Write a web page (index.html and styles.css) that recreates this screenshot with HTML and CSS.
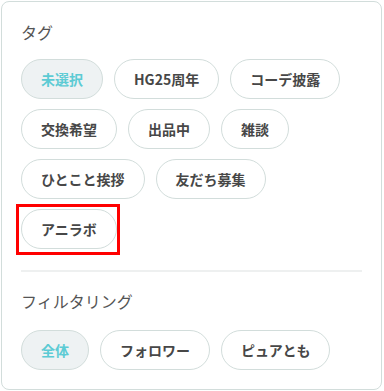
FILE: index.html
```html
<!DOCTYPE html>
<html lang="ja">

<head>
    <meta charset="UTF-8">
    <meta name="viewport" content="width=device-width, initial-scale=1.0">
    <title>タグ・フィルタリング</title>
    <link rel="stylesheet" href="styles.css">
</head>

<body>
    <div class="panel">
        <section class="group">
            <h2 class="group-title">タグ</h2>
            <div class="chips">
                <button class="chip active">未選択</button>
                <button class="chip">HG25周年</button>
                <button class="chip">コーデ披露</button>
                <button class="chip">交換希望</button>
                <button class="chip">出品中</button>
                <button class="chip">雑談</button>
                <button class="chip">ひとこと挨拶</button>
                <button class="chip">友だち募集</button>
                <span class="marked"><button class="chip">アニラボ</button></span>
            </div>
        </section>

        <hr class="divider">

        <section class="group">
            <h2 class="group-title filter-title">フィルタリング</h2>
            <div class="chips">
                <button class="chip active">全体</button>
                <button class="chip">フォロワー</button>
                <button class="chip">ピュアとも</button>
            </div>
        </section>
    </div>
</body>
</html>
```

FILE: styles.css
```css
:root {
    --border-color: #d2dddb;
    --text-color: #474747;
    --label-color: #555555;
    --accent: #5ccbd4;
    --active-bg: #eef2f3;
}

* {
    margin: 0;
    padding: 0;
    box-sizing: border-box;
}

body {
    font-family: "Noto Sans CJK JP", "Noto Sans", sans-serif;
    background-color: #ffffff;
    padding: 1px;
}

.panel {
    width: 381px;
    height: 389px;
    border: 1px solid var(--border-color);
    border-radius: 8px;
    padding: 18px 19px;
}

.group-title {
    font-size: 16px;
    font-weight: 400;
    line-height: 24px;
    color: var(--label-color);
    margin-bottom: 15px;
}

.filter-title {
    margin-bottom: 17px;
}

.chips {
    display: flex;
    flex-wrap: wrap;
    gap: 10px 11px;
}

.chip {
    font-family: inherit;
    font-size: 14px;
    font-weight: 700;
    color: var(--text-color);
    background-color: #ffffff;
    height: 40px;
    padding: 0 19px;
    border: 1px solid var(--border-color);
    border-radius: 20px;
    cursor: pointer;
}

.chip.active {
    color: var(--accent);
    background-color: var(--active-bg);
}

.marked {
    position: relative;
    display: inline-flex;
}

.marked::after {
    content: "";
    position: absolute;
    top: -5px;
    left: -5px;
    right: -3px;
    bottom: -6px;
    border: 3px solid #ff0000;
    pointer-events: none;
}

.divider {
    border: none;
    height: 2px;
    background-color: #eef0f0;
    margin: 21px 0 17px;
}
```
